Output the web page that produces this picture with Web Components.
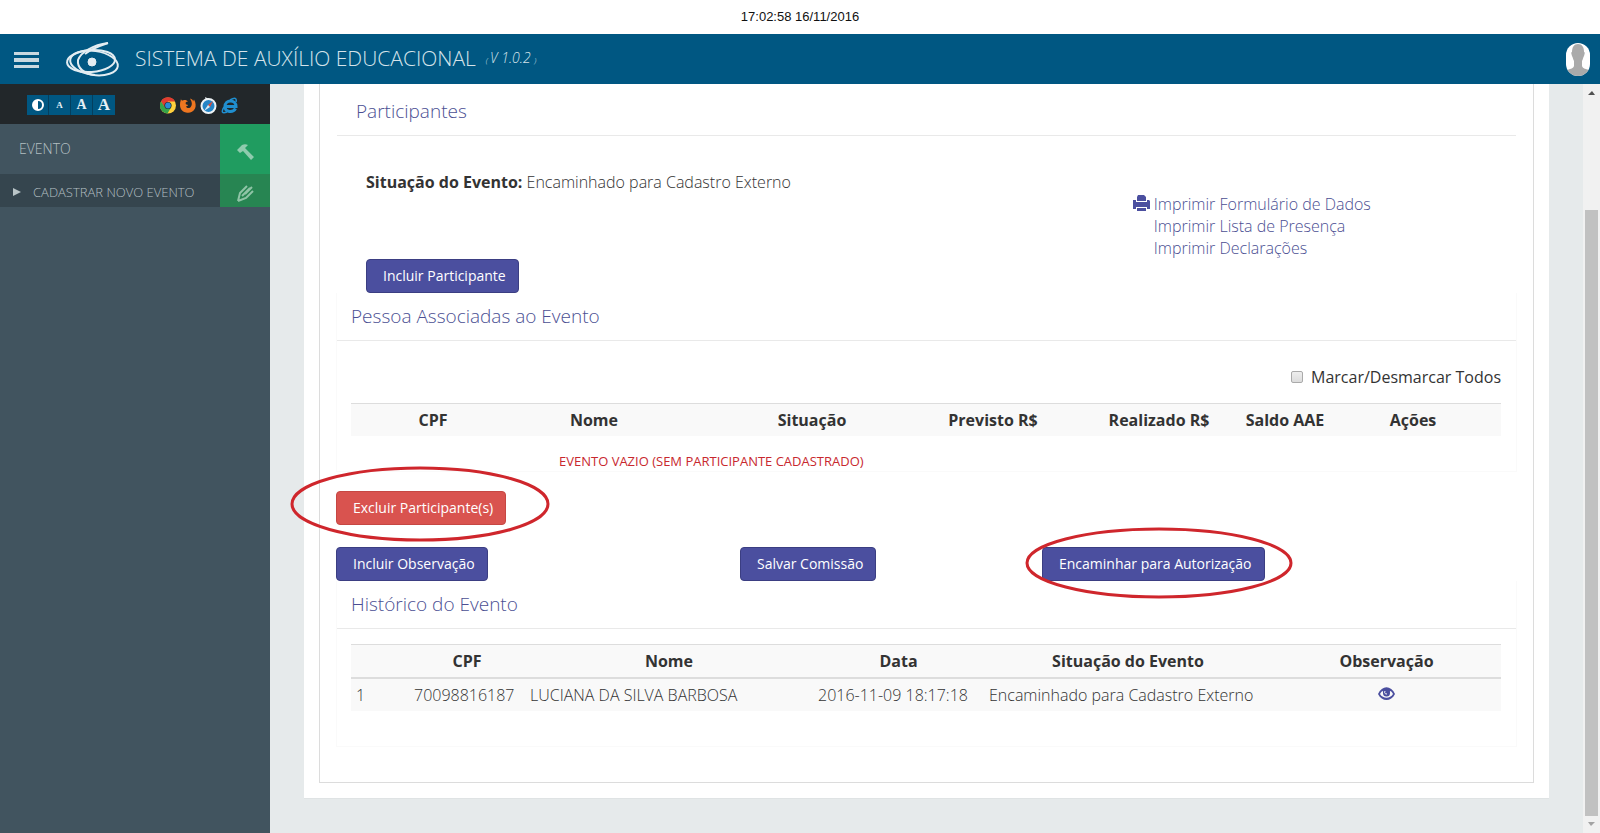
<!DOCTYPE html>
<html lang="pt-BR">
<head>
<meta charset="utf-8">
<title>Sistema de Auxílio Educacional</title>
<style>
  html, body { margin: 0; height: 100%; }
  body { font-family: "Open Sans", "Noto Sans", sans-serif; font-size: 16px; line-height: 22px; color: #333; overflow: hidden; }
</style>
</head>
<body>
<sae-app></sae-app>

<script>
const define = (name, html) => {
  const template = document.createElement('template');
  template.innerHTML = html;
  customElements.define(name, class extends HTMLElement {
    constructor() {
      super();
      this.attachShadow({ mode: 'open' }).append(template.content.cloneNode(true));
    }
  });
};

/* Bar with the date and time */
define('sae-clock', `
<style>
  :host { display: block; height: 34px; line-height: 34px; background: #fff; color: #111; text-align: center; font-family: "Liberation Sans", Arial, sans-serif; font-size: 13px; }
</style>
<slot></slot>`);

/* Blue header */
define('sae-header', `
<style>
  :host { display: flex; align-items: center; height: 50px; background: #005782; color: #d5e3ea; }
  button { display: block; width: 25px; height: 16px; margin: 2px 0 0 14px; padding: 0; border: 0; background: none; }
  .logo { margin-left: 26px; width: 56px; height: 38px; }
  h1 { margin: 0 0 2px 14px; font-size: 21px; font-weight: 300; line-height: 30px; }
  em { margin-left: 10px; font-size: 14px; font-weight: 300; line-height: 20px; }
  small { font-size: 8px; }
  .avatar { margin: 0 10px 0 auto; width: 24px; height: 33px; border-radius: 12px; }
  svg { display: block; }
</style>
<button aria-label="Menu"><svg width="25" height="16" fill="#c9d9e0"><path d="M0 0h25v3H0zM0 6h25v4H0zM0 13h25v3H0z"/></svg></button>
<svg class="logo" viewBox="0 0 56 38" fill="none" stroke="#e3edf2" stroke-width="2">
  <ellipse cx="26" cy="21" rx="24" ry="11" transform="rotate(-4 26 21)"/>
  <ellipse cx="29" cy="23" rx="24" ry="12" transform="rotate(8 29 23)"/>
  <path d="M43 3C28 5 16 12 13 20c-1 8 6 14 17 15"/>
  <path d="M43 3C34 6 26 9 20 14"/>
  <circle cx="27" cy="22" r="4" fill="#e3edf2" stroke-width="1"/>
</svg>
<h1>SISTEMA DE AUXÍLIO EDUCACIONAL</h1>
<em><small>( </small>V 1.0.2 <small>)</small></em>
<svg class="avatar" viewBox="0 0 24 33" role="img" aria-label="Usuário">
  <rect width="24" height="33" fill="#fff"/>
  <path d="M12 1c4 0 6 3 6 8 1 0 1 1 0 4-1 2-1 3-2 5v5c1 3 4 3 8 4v6H0v-6c4-1 7-1 8-4v-5c-1-2-1-3-2-5-1-3-1-4 0-4 0-5 2-8 6-8z" fill="#aaa"/>
</svg>`);

/* Accessibility buttons and supported browsers */
define('sae-tools', `
<style>
  :host { display: flex; align-items: center; height: 40px; box-sizing: border-box; padding-left: 27px; background: #22272a; }
  .sizes { display: flex; margin-top: 2px; }
  button { display: flex; align-items: center; justify-content: center; width: 22px; height: 20px; padding: 0; border: 0; border-right: 1px solid #043f5e; background: #005782; color: #e6f0f5; font-family: "Liberation Serif", serif; font-weight: 700; line-height: 18px; }
  .s { font-size: 9px; } .m { font-size: 14px; } .l { font-size: 17px; border-right: 0; }
  .browsers { display: flex; gap: 4px; margin: 3px 0 0 45px; }
  svg { display: block; }
</style>
<div class="sizes">
  <button aria-label="Contraste"><svg width="12" height="12"><circle cx="6" cy="6" r="5" fill="none" stroke="#fff" stroke-width="2"/><path d="M6 1a5 5 0 0 0 0 10z" fill="#fff"/></svg></button>
  <button class="s">A</button><button class="m">A</button><button class="l">A</button>
</div>
<div class="browsers">
  <svg width="16" height="17" viewBox="0 0 16 16"><circle cx="8" cy="8" r="8" fill="#ffd03d"/><path d="M1 4a8 8 0 0 1 14 0H8L4.500 10z" fill="#e13b30"/><path d="M1 4a8 8 0 0 0 6.500 12L11 10H5z" fill="#36a449"/><circle cx="8" cy="8" r="3.600" fill="#22272a"/><circle cx="8" cy="8" r="2.900" fill="#2a8bd5"/></svg>
  <svg width="16" height="17" viewBox="0 0 16 16"><path d="M1 1c0 2 1 2 2 2 2-1 4 0 5 1-2 0-3 1-2 3 1 0 2 0 2 1L6 9c1 2 4 2 5 0 2-3 0-6-1-8 3 1 3 2 3 3l1-2c2 3 2 7 1 9-2 4-6 5-9 4C1 14 0 10 0 7c0-3 1-4 1-6z" fill="#ee7620"/></svg>
  <svg width="17" height="17" viewBox="0 0 17 17"><circle cx="8.500" cy="9" r="7" fill="#2484c6" stroke="#eef3f6" stroke-width="2"/><path d="M5 0l4 2-3 1z" fill="#eef3f6"/><path d="M13 4l-3 6-2-2z" fill="#e14c3a"/><path d="M4 14l4-6 2 2z" fill="#dceaf2"/></svg>
  <svg width="17" height="17" viewBox="0 0 17 17" fill="none" stroke="#208fd0"><path d="M4 9.500h11C15 2 4 2 4 9.500c0 6 8 6.500 10.500 2" stroke-width="3"/><path d="M3 10c-3 5-2 7 3 5M9 3c5-3 7-2 6 2" stroke-width="1.500"/></svg>
</div>`);

/* Side menu row: label in the default slot, icon in its own */
define('sae-menu-item', `
<style>
  :host { display: flex; height: 50px; background: #41545f; }
  :host([sub]) { height: 33px; background: #35454e; }
  a { flex: 1; display: flex; align-items: center; padding-left: 19px; color: #b3bfc2; text-decoration: none; font-size: 14px; font-weight: 300; white-space: nowrap; }
  :host([sub]) a { padding: 2px 0 0 13px; font-size: 13px; gap: 12px; }
  .arrow { display: none; }
  :host([sub]) .arrow { display: block; width: 0; border: solid transparent; border-width: 4px 0 4px 8px; border-left-color: #b9c4c7; }
  span { display: flex; align-items: center; justify-content: center; width: 50px; padding-top: 5px; box-sizing: border-box; background: #209c60; }
  :host([sub]) span { background: #278552; }
</style>
<a href="#"><i class="arrow"></i><slot></slot></a>
<span><slot name="icon"></slot></span>`);

define('sae-sidebar', `
<style>
  :host { display: block; width: 270px; flex: none; background: #41545f; }
  svg { display: block; }
</style>
<sae-tools></sae-tools>
<nav>
  <sae-menu-item>EVENTO
    <svg slot="icon" width="17" height="17" viewBox="0 0 17 17" fill="#8fcbae"><path d="M0 7l5-5c2-1 4-1 6 0L8 5l9 9-3 3-8-9-3 2z"/></svg>
  </sae-menu-item>
  <sae-menu-item sub>CADASTRAR NOVO EVENTO
    <svg slot="icon" width="17" height="17" viewBox="0 0 17 17" fill="none" stroke="#8fc4a6" stroke-width="2"><path d="M1 16l2-8 7-7M1 16l8-3 7-7M5 11l8-8M15 2L8 9"/></svg>
  </sae-menu-item>
</nav>`);

/* Button, blue by default, red with the "danger" attribute */
define('sae-button', `
<style>
  :host { display: inline-block; position: relative; }
  button { display: block; height: 34px; padding: 0 12px 0 16px; border: 1px solid #3b3e82; border-radius: 4px; background: #4b4f9f; color: #fff; font: 14px/20px "Open Sans", sans-serif; white-space: nowrap; }
  :host([danger]) button { background: #d9534f; border-color: #c64743; }
  ::slotted(svg) { position: absolute; pointer-events: none; }
</style>
<button><slot></slot></button><slot name="mark"></slot>`);

/* Titled block */
define('sae-section', `
<style>
  :host { display: block; border: solid #fafafa; border-width: 0 1px 1px; }
  :host([plain]) { border-color: transparent; border-bottom: 0; }
  h2 { margin: 0; padding: 11px 14px 12px; border-bottom: 1px solid #e9e9e9; color: #4b4f93; font-size: 19px; font-weight: 300; line-height: 24px; }
  :host([first]) h2 { padding: 15px 19px 12px; }
</style>
<h2><slot name="title"></slot></h2>
<slot></slot>`);

define('sae-print-links', `
<style>
  :host { display: grid; grid-template-columns: 17px auto; column-gap: 4px; justify-content: start; align-content: start; color: #4b4f93; font-weight: 300; }
  a { grid-column: 2; color: inherit; text-decoration: none; }
  svg { display: block; margin-top: 2px; }
</style>
<svg width="17" height="16" viewBox="0 0 17 16" fill="#4b4f9f"><path d="M5 0h6l2 2v4H4V2zM0 5h3v2h11V5h2l1 1v8h-3v-2H3v2H0zM4 13h9v3H4z"/></svg>
<a href="#">Imprimir Formulário de Dados</a>
<a href="#">Imprimir Lista de Presença</a>
<a href="#">Imprimir Declarações</a>`);

const tableCss = `
  table { width: 100%; table-layout: fixed; border-collapse: separate; border-spacing: 0; }
  th, td { padding: 5px; line-height: 22px; white-space: nowrap; }
  th { padding: 5px 0; border-top: 1px solid #ddd; background: #f9f9f9; text-align: center; font-weight: 700; }`;

define('sae-people-table', `
<style>
  :host { display: block; padding: 25px 15px 0 14px; }
  ${tableCss}
  label { display: flex; align-items: center; justify-content: flex-end; gap: 8px; margin-bottom: 15px; }
  input { appearance: none; width: 12px; height: 12px; margin: 0; border: 1px solid #aaa; border-radius: 2px; background: linear-gradient(#eee, #dcdcdc); }
  td { padding: 15px 0 0; height: 20px; line-height: 20px; vertical-align: top; color: #c8282e; font-size: 13px; }
  .empty { padding-left: 82px; }
</style>
<label><input type="checkbox">Marcar/Desmarcar Todos</label>
<table>
  <colgroup><col style="width:38px"><col style="width:88px"><col style="width:234px"><col style="width:202px"><col style="width:160px"><col style="width:172px"><col style="width:80px"><col style="width:176px"></colgroup>
  <thead><tr><th></th><th>CPF</th><th>Nome</th><th>Situação</th><th>Previsto R$</th><th>Realizado R$</th><th>Saldo AAE</th><th>Ações</th></tr></thead>
  <tbody><tr><td colspan="2"></td><td colspan="6" class="empty">EVENTO VAZIO (SEM PARTICIPANTE CADASTRADO)</td></tr></tbody>
</table>`);

define('sae-history-table', `
<style>
  :host { display: block; padding: 15px 15px 35px 14px; }
  ${tableCss}
  th { border-bottom: 2px solid #ddd; }
  td { background: #f9f9f9; font-weight: 300; }
  svg { display: block; margin: 0 auto; }
</style>
<table>
  <colgroup><col style="width:58px"><col style="width:116px"><col style="width:288px"><col style="width:171px"><col style="width:288px"><col style="width:229px"></colgroup>
  <thead><tr><th></th><th>CPF</th><th>Nome</th><th>Data</th><th>Situação do Evento</th><th>Observação</th></tr></thead>
  <tbody><tr><td>1</td><td>70098816187</td><td>LUCIANA DA SILVA BARBOSA</td><td>2016-11-09 18:17:18</td><td>Encaminhado para Cadastro Externo</td>
  <td><a href="#" aria-label="Ver observação"><svg width="17" height="18" viewBox="0 0 17 18"><path d="M0 8C4-1 13-1 17 8c-4 8-13 8-17 0z" fill="#4b4f9f"/><path d="M2 8c1-2 2-3 3-3-1 5 6 6 7 0 1 0 2 1 3 3-3 5-10 5-13 0z" fill="#f9f9f9"/><circle cx="8.500" cy="7" r="3.500" fill="#4b4f9f"/><path d="M7 5c-1 2 0 3 2 3" stroke="#f9f9f9" fill="none"/></svg></a></td></tr></tbody>
</table>`);

/* Scroll track drawn beside the content */
define('sae-scrollbar', `
<style>
  :host { display: flex; flex-direction: column; align-items: center; width: 17px; flex: none; background: #f1f1f1; }
  svg { display: block; height: 17px; flex: none; }
  .before { flex: 109; } .thumb { flex: 606; width: 13px; background: #c1c1c1; }
</style>
<svg width="17" height="17"><path d="M5 11l4-4 3 4z" fill="#505050"/></svg>
<div class="before"></div><div class="thumb"></div>
<svg width="17" height="17"><path d="M5 6h7l-4 4z" fill="#a3a3a3"/></svg>`);

define('sae-page', `
<style>
  :host { display: block; flex: 1; min-width: 0; background: #e6eaeb; }
  .card { margin: 0 34px; padding: 0 15px 15px; background: #fff; border-bottom: 1px solid #dfe3e4; }
  .frame { padding: 0 16px 35px; border: solid #dcdcdc; border-width: 0 1px 1px; }
  .status { display: grid; grid-template-columns: 27fr 13fr; }
  .left { display: flex; flex-direction: column; align-items: flex-start; gap: 66px; padding: 35px 0 0 29px; }
  .light { font-weight: 300; }
  b { font-weight: 700; }
  sae-print-links { padding-top: 57px; }
  .actions { padding-top: 19px; display: grid; row-gap: 22px; grid-template-columns: 404fr 302fr 475fr; justify-items: start; }
  .actions :first-child { grid-column: 1 / -1; }
  .mark1 { left: -46px; top: -26px; } .mark2 { left: -17px; top: -22px; }
</style>
<div class="card"><div class="frame">
  <sae-section first plain>
    <span slot="title">Participantes</span>
    <div class="status">
      <div class="left">
        <div><b>Situação do Evento:</b> <span class="light">Encaminhado para Cadastro Externo</span></div>
        <sae-button>Incluir Participante</sae-button>
      </div>
      <sae-print-links></sae-print-links>
    </div>
  </sae-section>
  <sae-section>
    <span slot="title">Pessoa Associadas ao Evento</span>
    <sae-people-table></sae-people-table>
  </sae-section>
  <div class="actions">
    <sae-button danger>Excluir Participante(s)
      <svg slot="mark" class="mark1" width="260" height="78" fill="none" stroke="#cf262c" stroke-width="3"><ellipse cx="130" cy="39" rx="128" ry="36"/></svg>
    </sae-button>
    <sae-button>Incluir Observação</sae-button>
    <sae-button>Salvar Comissão</sae-button>
    <sae-button>Encaminhar para Autorização
      <svg slot="mark" class="mark2" width="268" height="76" fill="none" stroke="#cf262c" stroke-width="3"><ellipse cx="134" cy="38" rx="132" ry="34"/></svg>
    </sae-button>
  </div>
  <sae-section>
    <span slot="title">Histórico do Evento</span>
    <sae-history-table></sae-history-table>
  </sae-section>
</div></div>`);

define('sae-app', `
<style>
  :host { display: flex; flex-direction: column; min-height: 100vh; }
  .body { flex: 1; display: flex; }
</style>
<sae-clock>17:02:58 16/11/2016</sae-clock>
<sae-header></sae-header>
<div class="body">
  <sae-sidebar></sae-sidebar>
  <sae-page></sae-page>
  <sae-scrollbar></sae-scrollbar>
</div>`);
</script>
</body>
</html>
